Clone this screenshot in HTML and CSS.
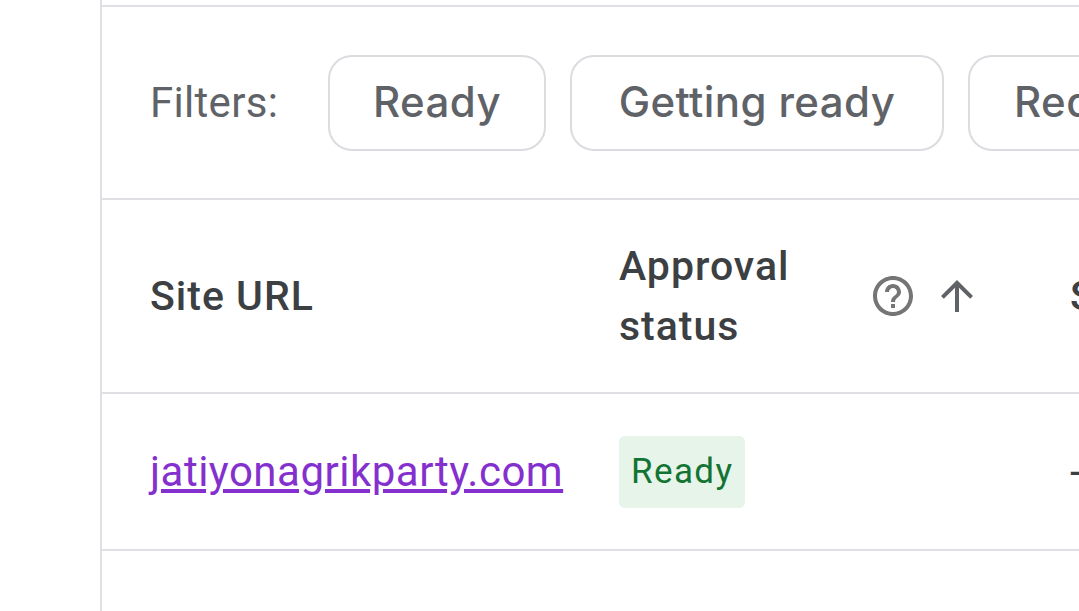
FILE: index.html
```html
<!DOCTYPE html>
<html lang="en">

<head>
  <meta charset="UTF-8">
  <title>Sites</title>
  <link rel="stylesheet" href="styles.css">
</head>

<body>
  <div class="panel">
    <div class="filters">
      <span class="filters-label">Filters:</span>
      <button class="chip chip-ready">Ready</button>
      <button class="chip chip-getting">Getting ready</button>
      <button class="chip chip-requires">Requires review</button>
    </div>
    <div class="table-row table-head">
      <div class="col-url">Site URL</div>
      <div class="col-status">
        <span class="status-title">Approval status</span>
        <svg class="icon-help" viewBox="0 0 24 24" width="48" height="48">
          <path d="M11 18h2v-2h-2v2zm1-16C6.48 2 2 6.48 2 12s4.48 10 10 10 10-4.48 10-10S17.52 2 12 2zm0 18c-4.41 0-8-3.59-8-8s3.59-8 8-8 8 3.59 8 8-3.59 8-8 8zm0-14c-2.21 0-4 1.79-4 4h2c0-1.1.9-2 2-2s2 .9 2 2c0 2-3 1.75-3 5h2c0-2.25 3-2.5 3-5 0-2.21-1.79-4-4-4z" />
        </svg>
        <svg class="icon-sort" viewBox="0 0 24 24" width="48" height="48">
          <path d="M4 12l1.41 1.41L11 7.83V20h2V7.83l5.58 5.59L20 12l-8-8-8 8z" />
        </svg>
      </div>
      <div class="col-next">Status</div>
    </div>
    <div class="table-row table-body">
      <div class="col-url"><a href="#" class="site-link">jatiyonagrikparty.com</a></div>
      <div class="col-status"><span class="badge">Ready</span></div>
      <div class="col-next">-</div>
    </div>
  </div>
</body>

</html>
```

FILE: styles.css
```css
html,
body {
  height: 100%;
}

body {
  margin: 0;
  background-color: #fff;
  font-family: Roboto, Arial, sans-serif;
  color: #3c4043;
  overflow: hidden;
}

.panel {
  margin: 0 0 0 100px;
  width: 1400px;
  height: 100%;
  padding-top: 5px;
  box-sizing: border-box;
  border-left: 2px solid #e0e0e4;
}

.filters {
  display: flex;
  align-items: center;
  height: 195px;
  padding-left: 48px;
  box-sizing: border-box;
  border-top: 2px solid #e0e0e4;
  border-bottom: 2px solid #e0e0e4;
}

.filters-label {
  width: 178px;
  flex: none;
  font-size: 42px;
  letter-spacing: 0.3px;
  color: #5f6368;
}

.chip {
  height: 96px;
  margin-right: 24px;
  padding: 0 0 2px;
  flex: none;
  background-color: #fff;
  border: 2px solid #dadce0;
  border-radius: 24px;
  font-family: Inter, Roboto, sans-serif;
  font-size: 42px;
  font-weight: 500;
  letter-spacing: 0.4px;
  color: #5f6368;
}

.chip-ready {
  width: 218px;
}

.chip-getting {
  width: 374px;
}

.chip-requires {
  width: 418px;
}

.table-row {
  display: flex;
  align-items: center;
  box-sizing: border-box;
  border-bottom: 2px solid #e0e0e4;
}

.table-head {
  height: 194px;
  font-size: 41px;
  font-weight: 500;
  letter-spacing: 1px;
}

.table-body {
  height: 157px;
  font-size: 42px;
  letter-spacing: 0.5px;
}

.col-url {
  width: 517px;
  padding-left: 48px;
  box-sizing: border-box;
}

.col-status {
  width: 451px;
  display: flex;
  align-items: center;
}

.status-title {
  width: 250px;
  line-height: 60px;
}

.col-next {
  flex: 1;
}

.icon-help {
  fill: #757575;
  margin-right: 16px;
}

.icon-sort {
  fill: #5f6368;
}

.site-link {
  color: #8430ce;
}

.badge {
  display: inline-block;
  padding: 0 12px;
  height: 72px;
  line-height: 71px;
  background-color: #e6f4ea;
  border-radius: 6px;
  font-size: 35px;
  letter-spacing: 1.4px;
  color: #137333;
}
```
